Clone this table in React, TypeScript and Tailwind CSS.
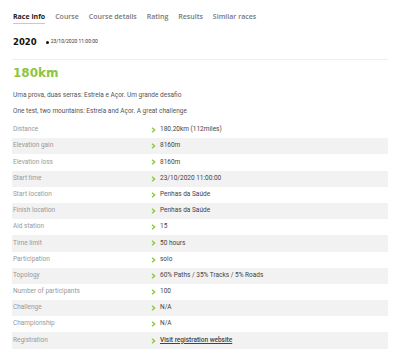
import React from "react";

const TABS = ["Race info", "Course", "Course details", "Rating", "Results", "Similar races"];

const ROWS: [string, string, boolean?][] = [
  ["Distance", "180.20km (112miles)"],
  ["Elevation gain", "8160m"],
  ["Elevation loss", "8160m"],
  ["Start time", "23/10/2020 11:00:00"],
  ["Start location", "Penhas da Saúde"],
  ["Finish location", "Penhas da Saúde"],
  ["Aid station", "15"],
  ["Time limit", "50 hours"],
  ["Participation", "solo"],
  ["Topology", "60% Paths / 35% Tracks / 5% Roads"],
  ["Number of participants", "100"],
  ["Challenge", "N/A"],
  ["Championship", "N/A"],
  ["Registration", "Visit registration website", true],
];

function Chevron() {
  return (
    <svg width="5" height="6" viewBox="0 0 5 6" className="shrink-0">
      <path d="M1 0.8 L3.6 3 L1 5.2" fill="none" stroke="#8dc63f" strokeWidth="1.4" />
    </svg>
  );
}

export default function App() {
  return (
    <div className="w-[400px] h-[358px] bg-white overflow-hidden font-['Roboto',sans-serif]">
      {/* TABS */}
      <div className="flex gap-[10px] px-[13px] pt-[12px] font-['Open_Sans',sans-serif] text-[7px] leading-[10px] font-semibold text-[#777]">
        {TABS.map((t, i) => (
          <div
            key={t}
            className={
              i === 0
                ? "pb-[1px] border-b border-[#b9dd8f] text-[#222] font-bold"
                : "pb-[1px]"
            }
          >
            {t}
          </div>
        ))}
      </div>

      {/* YEAR */}
      <div className="flex items-center h-[16px] px-[13px] mt-[10px]">
        <span className="font-['DejaVu_Sans',sans-serif] font-bold text-[8.5px] text-[#111]">2020</span>
        <span className="ml-[9px] w-[3px] h-[3px] rounded-full bg-[#111]" />
        <span className="ml-[2px] text-[5px] text-[#333]">23/10/2020 11:00:00</span>
      </div>

      <div className="mx-[12px] mt-[9px] border-t border-[#eee]" />

      {/* TITLE */}
      <div className="px-[13px] mt-[4px] font-['DejaVu_Sans',sans-serif] font-bold text-[12px] text-[#8dc63f] leading-[18px]">
        180km
      </div>

      <div className="px-[13px] mt-[8px] text-[6.5px] leading-[10px] text-[#555] space-y-[6px]">
        <p>Uma prova, duas serras: Estrela e Açor. Um grande desafio</p>
        <p>One test, two mountains: Estrela and Açor. A great challenge</p>
      </div>

      {/* TABLE */}
      <div className="mx-[12px] mt-[6px] text-[6.5px]">
        {ROWS.map(([label, value, link], i) => (
          <div
            key={label}
            className={`flex items-center h-[16.2px] ${i % 2 === 1 ? "bg-[#f2f2f2]" : ""}`}
          >
            <div className="w-[139px] pl-[1px] text-[#999]">{label}</div>
            <Chevron />
            <div
              className={`ml-[4px] text-[#444] ${link ? "underline font-medium text-[#222]" : ""}`}
            >
              {value}
            </div>
          </div>
        ))}
      </div>
    </div>
  );
}
